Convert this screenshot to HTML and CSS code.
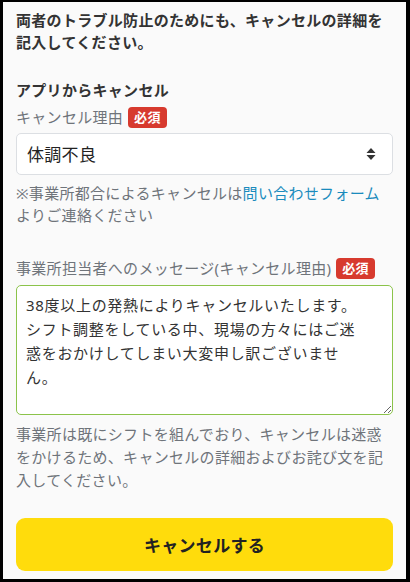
FILE: index.html
```html
<!DOCTYPE html>
<html lang="ja">
<head>
    <meta charset="UTF-8">
    <meta name="viewport" content="width=device-width, initial-scale=1.0">
    <title>キャンセル</title>
    <link rel="stylesheet" href="styles.css">
</head>
<body>

<div class="frame">
    <p class="lead">両者のトラブル防止のためにも、キャンセルの詳細を記入してください。</p>

    <h3 class="section-title">アプリからキャンセル</h3>

    <form class="cancel-form">
        <label class="field-label" for="reason">キャンセル理由 <span class="badge">必須</span></label>
        <div class="select-wrap">
            <select id="reason" name="reason">
                <option>体調不良</option>
                <option>家庭の事情</option>
                <option>その他</option>
            </select>
            <svg class="select-arrow" width="10" height="14" viewBox="0 0 10 14">
                <path d="M5 1 L9.5 6 H0.5 Z" fill="#333"/>
                <path d="M5 13 L9.5 8 H0.5 Z" fill="#333"/>
            </svg>
        </div>
        <p class="note">※事業所都合によるキャンセルは<a href="#">問い合わせフォーム</a>よりご連絡ください</p>

        <label class="field-label msg-label" for="message">事業所担当者へのメッセージ(キャンセル理由) <span class="badge">必須</span></label>
        <textarea id="message" name="message">38度以上の発熱によりキャンセルいたします。
シフト調整をしている中、現場の方々にはご迷
惑をおかけしてしまい大変申し訳ございませ
ん。</textarea>
        <p class="help">事業所は既にシフトを組んでおり、キャンセルは迷惑をかけるため、キャンセルの詳細およびお詫び文を記入してください。</p>

        <button type="button">キャンセルする</button>
    </form>
</div>

</body>
</html>
```

FILE: styles.css
```css
html, body {
    margin: 0;
    padding: 0;
}
body {
    font-family: "Noto Sans", "Noto Sans CJK JP", sans-serif;
    background-color: #000;
}
.frame {
    box-sizing: border-box;
    height: 582px;
    border-style: solid;
    border-color: #000;
    border-width: 2px 4px 3px 3px;
    background-color: #fafafa;
    padding: 7px 13px 0 13px;
    overflow: hidden;
    letter-spacing: 0.3px;
}
.lead {
    margin: 0;
    font-size: 15px;
    line-height: 22px;
    font-weight: bold;
    color: #333;
}
.section-title {
    margin: 26px 0 5px;
    font-size: 15px;
    line-height: 22px;
    font-weight: bold;
    color: #333;
}
.cancel-form {
    display: flex;
    flex-direction: column;
}
.field-label {
    display: flex;
    align-items: center;
    gap: 5px;
    font-size: 15px;
    line-height: 22px;
    color: #6f747a;
}
.badge {
    display: inline-block;
    background-color: #d73a2e;
    color: #fff;
    font-size: 13px;
    font-weight: bold;
    line-height: 21px;
    padding: 0 6px;
    border-radius: 4px;
}
.select-wrap {
    position: relative;
    margin-top: 5px;
}
select {
    appearance: none;
    -webkit-appearance: none;
    width: 100%;
    height: 42px;
    box-sizing: border-box;
    padding: 0 30px 0 10px;
    font-family: inherit;
    font-size: 17px;
    letter-spacing: 0.3px;
    color: #222;
    background-color: #fff;
    border: 1px solid #dcdfe3;
    border-radius: 5px;
}
.select-arrow {
    position: absolute;
    right: 17px;
    top: 14px;
    pointer-events: none;
}
.note {
    margin: 7px 0 0;
    font-size: 15px;
    line-height: 22px;
    color: #6f747a;
}
.note a {
    color: #1a8bbd;
    text-decoration: none;
}
.msg-label {
    margin-top: 31px;
}
textarea {
    margin-top: 6px;
    box-sizing: border-box;
    width: 100%;
    height: 130px;
    padding: 7px 9px;
    font-family: inherit;
    font-size: 15px;
    letter-spacing: 0.7px;
    line-height: 24px;
    color: #333;
    background-color: #fff;
    border: 1.5px solid #8bc34a;
    border-radius: 5px;
    outline: none;
}
.help {
    margin: 8px 0 0;
    font-size: 15px;
    line-height: 23px;
    color: #6f747a;
}
button {
    margin-top: 26px;
    height: 53px;
    width: 100%;
    background-color: #ffdc0c;
    color: #222;
    border: none;
    border-radius: 9px;
    font-family: inherit;
    font-size: 17px;
    font-weight: bold;
    letter-spacing: 0.3px;
    cursor: pointer;
}
```
